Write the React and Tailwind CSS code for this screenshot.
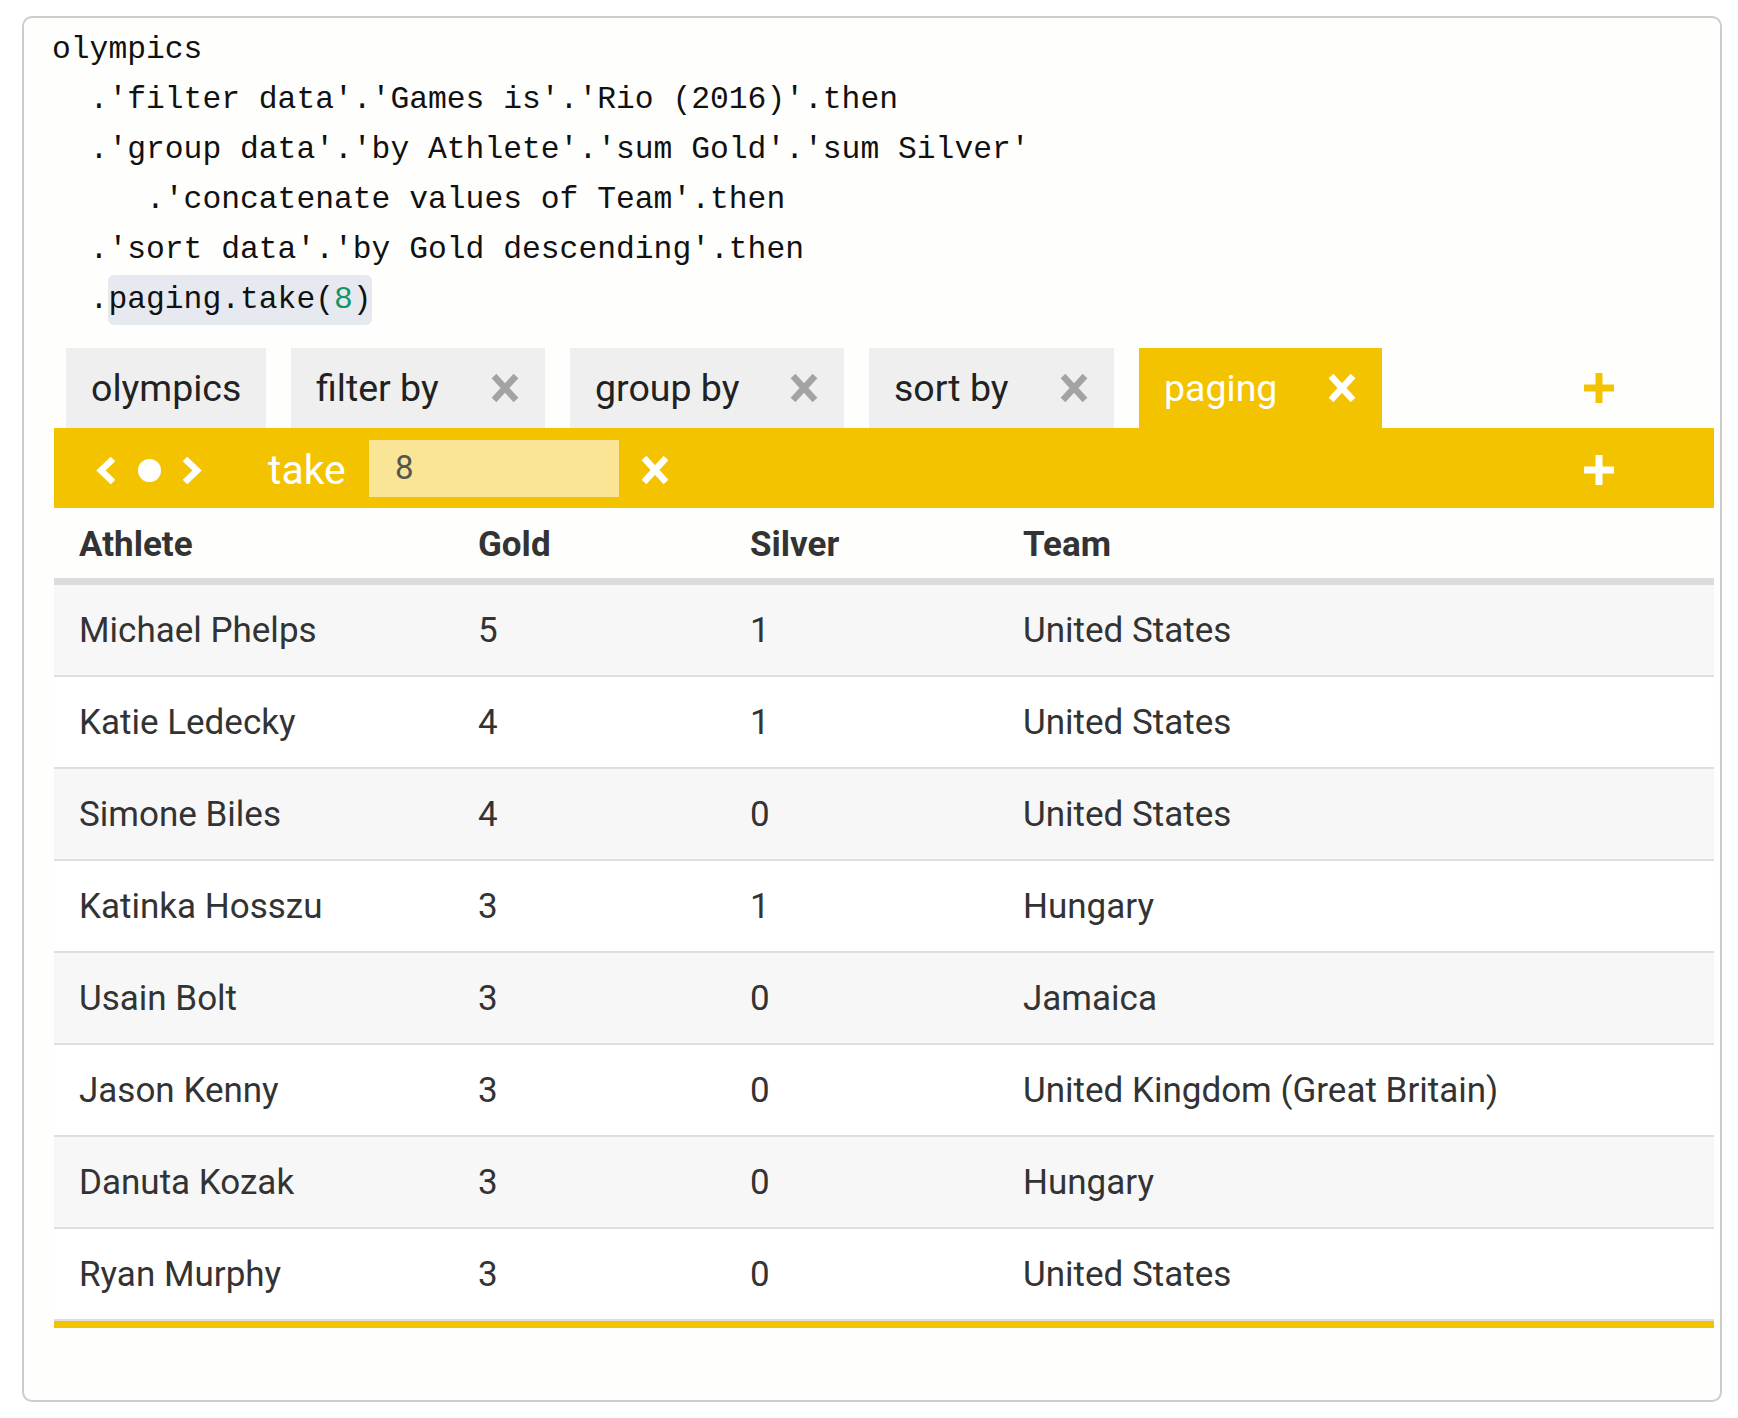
import React from "react";

const XIcon = ({ color = "#a3a3a3", size = 30 }) => (
  <svg width={size} height={28} viewBox="0 0 30 28" className="block shrink-0">
    <path d="M4 2 L26 26 M26 2 L4 26" stroke={color} strokeWidth="6.5" strokeLinecap="butt" fill="none" />
  </svg>
);

const PlusIcon = ({ color }) => (
  <svg width="30" height="30" viewBox="0 0 30 30" className="block shrink-0">
    <rect x="0" y="11.5" width="30" height="7" fill={color} />
    <rect x="11.5" y="0" width="7" height="30" fill={color} />
  </svg>
);

const Tab = ({ label, width, closable = true, active = false }) => (
  <div
    className={`h-[80px] flex items-center justify-between px-[25px] shrink-0 ${
      active ? "bg-[#f3c300] text-white" : "bg-[#efefef] text-[#222222]"
    }`}
    style={{ width }}
  >
    <span className="text-[37.5px] leading-none pt-[2px]">{label}</span>
    {closable && <XIcon color={active ? "#ffffff" : "#a3a3a3"} />}
  </div>
);

const rows = [
  ["Michael Phelps", "5", "1", "United States"],
  ["Katie Ledecky", "4", "1", "United States"],
  ["Simone Biles", "4", "0", "United States"],
  ["Katinka Hosszu", "3", "1", "Hungary"],
  ["Usain Bolt", "3", "0", "Jamaica"],
  ["Jason Kenny", "3", "0", "United Kingdom (Great Britain)"],
  ["Danuta Kozak", "3", "0", "Hungary"],
  ["Ryan Murphy", "3", "0", "United States"],
];

export default function App() {
  return (
    <div className="w-[1738px] h-[1418px] bg-white pt-[16px] pl-[22px] font-['Roboto',sans-serif]">
      <div className="w-[1700px] h-[1386px] border-2 border-[#cccccc] rounded-[10px] bg-[#fefefd]">
        {/* code */}
        <div className="pt-[7px] pl-[28px] font-['Liberation_Mono',monospace] text-[31.33px] leading-[50px] text-[#111111] whitespace-pre">
          <div>olympics</div>
          <div>{"  .'filter data'.'Games is'.'Rio (2016)'.then"}</div>
          <div>{"  .'group data'.'by Athlete'.'sum Gold'.'sum Silver'"}</div>
          <div>{"     .'concatenate values of Team'.then"}</div>
          <div>{"  .'sort data'.'by Gold descending'.then"}</div>
          <div>
            {"  ."}
            <span className="inline-block h-[50px] bg-[#e6eaf0] rounded-[6px]">
              paging.take(<span className="text-[#16936a]">8</span>)
            </span>
          </div>
        </div>

        {/* tabs + content */}
        <div className="mt-[23px] ml-[30px] w-[1660px]">
          <div className="flex items-center gap-[25px] pl-[12px]">
            <Tab label="olympics" width={200} closable={false} />
            <Tab label="filter by" width={254} />
            <Tab label="group by" width={274} />
            <Tab label="sort by" width={245} />
            <Tab label="paging" width={243} active />
            <div className="flex-1" />
            <div className="mr-[100px]">
              <PlusIcon color="#f3c300" />
            </div>
          </div>

          {/* yellow bar */}
          <div className="h-[80px] bg-[#f3c300] flex items-center pl-[42px] pt-[4px]">
            <svg width="20" height="27" viewBox="0 0 20 27" className="block shrink-0">
              <path d="M17 2 L5 13.5 L17 25" stroke="#ffffff" strokeWidth="6.5" fill="none" />
            </svg>
            <div className="ml-[22px] w-[23px] h-[23px] rounded-full bg-white shrink-0" />
            <svg width="20" height="27" viewBox="0 0 20 27" className="block shrink-0 ml-[21px]">
              <path d="M3 2 L15 13.5 L3 25" stroke="#ffffff" strokeWidth="6.5" fill="none" />
            </svg>
            <div className="ml-[66px] w-[101px] text-white text-[41px] leading-none">take</div>
            <div className="w-[250px] h-[57px] bg-[#fae596] flex items-center pl-[26px] text-[#555555] text-[33px] -mt-[4px]">
              8
            </div>
            <div className="ml-[21px]">
              <XIcon color="#ffffff" />
            </div>
            <div className="flex-1" />
            <div className="mr-[100px]">
              <PlusIcon color="#ffffff" />
            </div>
          </div>

          {/* table */}
          <div className="text-[#333333] text-[35px]">
            <div className="grid grid-cols-[399px_272px_273px_1fr] h-[77px] border-b-[7px] border-[#dcdcdc] items-center font-bold pt-[4px]">
              <div className="pl-[25px]">Athlete</div>
              <div className="pl-[25px]">Gold</div>
              <div className="pl-[25px]">Silver</div>
              <div className="pl-[25px]">Team</div>
            </div>
            {rows.map((r, i) => (
              <div
                key={i}
                className={`grid grid-cols-[399px_272px_273px_1fr] h-[92px] border-b-2 border-[#dedede] items-center pt-[2px] ${
                  i % 2 === 0 ? "bg-[#f7f7f7]" : "bg-white"
                }`}
              >
                {r.map((c, j) => (
                  <div key={j} className="pl-[25px]">
                    {c}
                  </div>
                ))}
              </div>
            ))}
            <div className="h-[7px] bg-[#f3c300]" />
          </div>
        </div>
      </div>
    </div>
  );
}
